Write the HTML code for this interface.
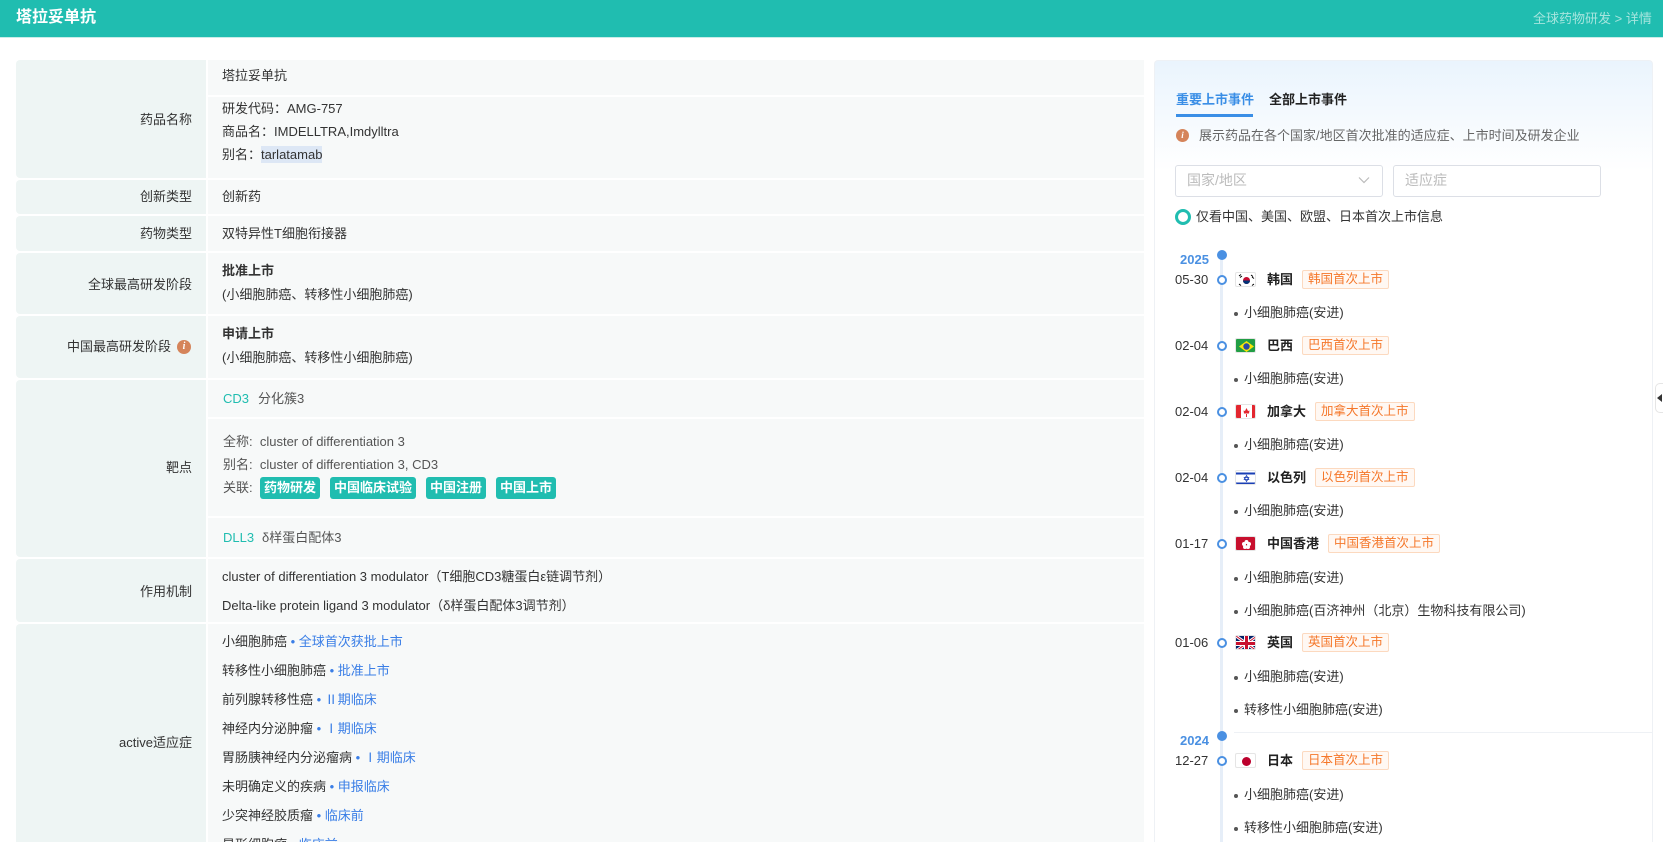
<!DOCTYPE html>
<html style="width:1663px;height:842px;overflow:hidden"><head><meta charset="utf-8"><style>
*{margin:0;padding:0;box-sizing:border-box}
body{width:1663px;height:842px;overflow:hidden;background:#fff;font-family:"Liberation Sans","Noto Sans CJK SC",sans-serif;font-size:13px;line-height:19px;color:#333;position:relative}
.a{position:absolute;white-space:nowrap;line-height:19px}
.hdr{position:absolute;left:0;top:0;width:1663px;height:38px;background:#20bdb0;border-bottom:1px solid #c9ece8}
.lb{position:absolute;left:16px;width:190px;background:#eef5f4;border-radius:4px 0 0 4px}
.vl{position:absolute;left:208px;width:936px;background:#f7f9f9}
.lt{position:absolute;right:1471px;white-space:nowrap;font-size:13px;line-height:19px;color:#333}
.tag{position:absolute;height:22px;line-height:22px;background:#20bdb0;color:#fff;font-weight:bold;border-radius:3px;padding:0 4px;font-size:13px}
.blue{color:#3a7ee6}
.panel{position:absolute;left:1154px;top:60px;width:499px;height:782px;border:1px solid #eef1f5;border-bottom:none;border-radius:4px 4px 0 0;background:linear-gradient(#eaf4fd 0,#fff 110px)}
.date{position:absolute;left:1175px;font-size:13px;line-height:19px;color:#333}
.dot{position:absolute;left:1217px;width:10px;height:10px;border:2.5px solid #4a90e2;border-radius:50%;background:#fff}
.fl{position:absolute;left:1235px;width:21px;height:15px;border:1px solid #e5e5e5;border-radius:2px;overflow:hidden}
.cn{position:absolute;left:1267px;font-weight:bold;color:#222;line-height:19px;white-space:nowrap}
.tg{position:absolute;height:19px;line-height:17px;border:1px solid #fcd9bf;background:#fff8f3;color:#f5772a;padding:0 5px;font-size:12.5px;border-radius:2px;white-space:nowrap}
.bl{position:absolute;left:1234px;color:#333;line-height:19px;white-space:nowrap}
.bl:before{content:"";display:inline-block;width:4px;height:4px;background:#555;border-radius:50%;margin-right:6px;vertical-align:middle}
</style></head><body>
<div class="hdr"></div>
<div class="a" style="left:16px;top:8px;font-size:16px;font-weight:bold;color:#fff;line-height:20px">塔拉妥单抗</div>
<div class="a" style="left:1533px;top:9px;font-size:13px;color:#a6e5de">全球药物研发 &gt; 详情</div>

<div class="lb" style="top:60px;height:118px"></div>
<div class="vl" style="top:60px;height:35px"></div>
<div class="vl" style="top:97px;height:81px"></div>
<div class="lb" style="top:180px;height:34px"></div><div class="vl" style="top:180px;height:34px"></div>
<div class="lb" style="top:216px;height:35px"></div><div class="vl" style="top:216px;height:35px"></div>
<div class="lb" style="top:253px;height:61px"></div><div class="vl" style="top:253px;height:61px"></div>
<div class="lb" style="top:316px;height:62px"></div><div class="vl" style="top:316px;height:62px"></div>
<div class="lb" style="top:380px;height:177px"></div>
<div class="vl" style="top:380px;height:37px"></div>
<div class="vl" style="top:419px;height:97px"></div>
<div class="vl" style="top:518px;height:39px"></div>
<div class="lb" style="top:559px;height:63px"></div><div class="vl" style="top:559px;height:63px"></div>
<div class="lb" style="top:624px;height:218px;border-radius:4px 0 0 0"></div><div class="vl" style="top:624px;height:218px"></div>

<div class="lt" style="top:110px">药品名称</div>
<div class="lt" style="top:187px">创新类型</div>
<div class="lt" style="top:224px">药物类型</div>
<div class="lt" style="top:275px">全球最高研发阶段</div>
<div class="lt" style="top:337px;right:1492px">中国最高研发阶段</div>
<div class="a" style="left:177px;top:340px;width:14px;height:14px;border-radius:50%;background:#d5845a;color:#fff;font-size:10px;font-style:italic;font-weight:bold;text-align:center;line-height:14px;font-family:'Liberation Serif',serif">i</div>
<div class="lt" style="top:458px">靶点</div>
<div class="lt" style="top:582px">作用机制</div>
<div class="lt" style="top:733px">active适应症</div>

<div class="a" style="left:222px;top:66px">塔拉妥单抗</div>
<div class="a" style="left:222px;top:99px">研发代码：AMG-757</div>
<div class="a" style="left:222px;top:122px">商品名：IMDELLTRA,Imdylltra</div>
<div class="a" style="left:222px;top:145px">别名：<span style="background:#dde7f5;padding:1px 0">tarlatamab</span></div>
<div class="a" style="left:222px;top:187px">创新药</div>
<div class="a" style="left:222px;top:224px">双特异性T细胞衔接器</div>
<div class="a" style="left:222px;top:261px;font-weight:bold">批准上市</div>
<div class="a" style="left:222px;top:285px">(小细胞肺癌、转移性小细胞肺癌)</div>
<div class="a" style="left:222px;top:324px;font-weight:bold">申请上市</div>
<div class="a" style="left:222px;top:348px">(小细胞肺癌、转移性小细胞肺癌)</div>
<div class="a" style="left:223px;top:389px;color:#20bdb0">CD3</div>
<div class="a" style="left:258px;top:389px;color:#555">分化簇3</div>
<div class="a" style="left:223px;top:432px;color:#555">全称:&nbsp; cluster of differentiation 3</div>
<div class="a" style="left:223px;top:455px;color:#555">别名:&nbsp; cluster of differentiation 3, CD3</div>
<div class="a" style="left:223px;top:478px;color:#555">关联:</div>
<div class="tag" style="left:260px;top:477px">药物研发</div>
<div class="tag" style="left:330px;top:477px">中国临床试验</div>
<div class="tag" style="left:426px;top:477px">中国注册</div>
<div class="tag" style="left:496px;top:477px">中国上市</div>
<div class="a" style="left:223px;top:528px;color:#20bdb0">DLL3</div>
<div class="a" style="left:262px;top:528px;color:#555">δ样蛋白配体3</div>
<div class="a" style="left:222px;top:567px">cluster of differentiation 3 modulator（T细胞CD3糖蛋白ε链调节剂）</div>
<div class="a" style="left:222px;top:596px">Delta-like protein ligand 3 modulator（δ样蛋白配体3调节剂）</div>
<div class="a" style="left:222px;top:632px">小细胞肺癌<span class="blue"> • 全球首次获批上市</span></div>
<div class="a" style="left:222px;top:661px">转移性小细胞肺癌<span class="blue"> • 批准上市</span></div>
<div class="a" style="left:222px;top:690px">前列腺转移性癌<span class="blue"> • Ⅱ期临床</span></div>
<div class="a" style="left:222px;top:719px">神经内分泌肿瘤<span class="blue"> • Ⅰ期临床</span></div>
<div class="a" style="left:222px;top:748px">胃肠胰神经内分泌瘤病<span class="blue"> • Ⅰ期临床</span></div>
<div class="a" style="left:222px;top:777px">未明确定义的疾病<span class="blue"> • 申报临床</span></div>
<div class="a" style="left:222px;top:806px">少突神经胶质瘤<span class="blue"> • 临床前</span></div>
<div class="a" style="left:222px;top:835px">星形细胞瘤<span class="blue"> • 临床前</span></div>

<div class="panel"></div>
<div class="a" style="left:1176px;top:90px;color:#3a8ee6;font-weight:bold">重要上市事件</div>
<div class="a" style="left:1176px;top:114px;width:77px;height:3px;background:#3a8ee6"></div>
<div class="a" style="left:1269px;top:90px;color:#222;font-weight:bold">全部上市事件</div>
<div class="a" style="left:1176px;top:129px;width:13px;height:13px;border-radius:50%;background:#d5845a;color:#fff;font-size:9px;font-style:italic;font-weight:bold;text-align:center;line-height:13px;font-family:'Liberation Serif',serif">i</div>
<div class="a" style="left:1199px;top:126px;color:#666">展示药品在各个国家/地区首次批准的适应症、上市时间及研发企业</div>
<div class="a" style="left:1175px;top:165px;width:208px;height:32px;border:1px solid #dcdfe6;border-radius:3px;background:#fff"></div>
<div class="a" style="left:1187px;top:171px;color:#bbb;font-size:14px">国家/地区</div>
<svg class="a" style="left:1358px;top:176px" width="12" height="8"><path d="M1 1.5L6 6.5L11 1.5" stroke="#bbb" fill="none" stroke-width="1.2"/></svg>
<div class="a" style="left:1393px;top:165px;width:208px;height:32px;border:1px solid #dcdfe6;border-radius:3px;background:#fff"></div>
<div class="a" style="left:1405px;top:171px;color:#bbb;font-size:14px">适应症</div>
<div class="a" style="left:1175px;top:209px;width:16px;height:16px;border:3px solid #20bdb0;border-radius:50%"></div>
<div class="a" style="left:1196px;top:207px;color:#333">仅看中国、美国、欧盟、日本首次上市信息</div>

<div class="a" style="left:1220px;top:255px;width:3px;height:587px;background:#e6eef8"></div>
<div class="a" style="left:1180px;top:250px;color:#4a90e2;font-weight:bold">2025</div>
<div class="a" style="left:1217px;top:250px;width:10px;height:10px;border-radius:50%;background:#4a90e2"></div>

<div class="date" style="top:270px">05-30</div><div class="dot" style="top:275px"></div>
<div class="fl" style="top:272px;background:#fff"><svg width="21" height="15"><circle cx="10.5" cy="7.5" r="3.5" fill="#c60c30"/><path d="M7 7.5a3.5 3.5 0 0 0 7 0" fill="#003478"/><g stroke="#000" stroke-width="1"><path d="M3 3l2 -1.5M4 4.5l2-1.5M15 2l2 1.5M16 4l2 1.5M3 11l2 1.5M16 12.5l2-1.5"/></g></svg></div>
<div class="cn" style="top:270px">韩国</div><div class="tg" style="left:1302px;top:270px">韩国首次上市</div>
<div class="bl" style="top:303px">小细胞肺癌(安进)</div>

<div class="date" style="top:336px">02-04</div><div class="dot" style="top:341px"></div>
<div class="fl" style="top:338px;background:#229e45"><svg width="21" height="15"><path d="M10.5 2L18 7.5L10.5 13L3 7.5Z" fill="#f8e509"/><circle cx="10.5" cy="7.5" r="3.2" fill="#2b49a3"/></svg></div>
<div class="cn" style="top:336px">巴西</div><div class="tg" style="left:1302px;top:336px">巴西首次上市</div>
<div class="bl" style="top:369px">小细胞肺癌(安进)</div>

<div class="date" style="top:402px">02-04</div><div class="dot" style="top:407px"></div>
<div class="fl" style="top:404px;background:#fff"><svg width="21" height="15"><rect width="5" height="15" fill="#e3262f"/><rect x="16" width="5" height="15" fill="#e3262f"/><path d="M10.5 3l1.5 3 1.5-.5-.5 3h-5l-.5-3 1.5.5z M10 9h1v3h-1z" fill="#e3262f"/></svg></div>
<div class="cn" style="top:402px">加拿大</div><div class="tg" style="left:1315px;top:402px">加拿大首次上市</div>
<div class="bl" style="top:435px">小细胞肺癌(安进)</div>

<div class="date" style="top:468px">02-04</div><div class="dot" style="top:473px"></div>
<div class="fl" style="top:470px;background:#fff"><svg width="21" height="15"><rect y="1.5" width="21" height="2" fill="#1a3fb5"/><rect y="11.5" width="21" height="2" fill="#1a3fb5"/><path d="M10.5 4.5l2.3 4h-4.6zM10.5 10.5l2.3-4h-4.6z" fill="none" stroke="#1a3fb5" stroke-width=".8"/></svg></div>
<div class="cn" style="top:468px">以色列</div><div class="tg" style="left:1315px;top:468px">以色列首次上市</div>
<div class="bl" style="top:501px">小细胞肺癌(安进)</div>

<div class="date" style="top:534px">01-17</div><div class="dot" style="top:539px"></div>
<div class="fl" style="top:536px;background:#c8102e"><svg width="21" height="15"><g fill="#fff"><circle cx="10.5" cy="5" r="2"/><circle cx="13" cy="7" r="2"/><circle cx="12" cy="10" r="2"/><circle cx="9" cy="10" r="2"/><circle cx="8" cy="7" r="2"/></g></svg></div>
<div class="cn" style="top:534px">中国香港</div><div class="tg" style="left:1328px;top:534px">中国香港首次上市</div>
<div class="bl" style="top:568px">小细胞肺癌(安进)</div>
<div class="bl" style="top:601px">小细胞肺癌(百济神州（北京）生物科技有限公司)</div>

<div class="date" style="top:633px">01-06</div><div class="dot" style="top:638px"></div>
<div class="fl" style="top:635px;background:#012169"><svg width="21" height="15"><path d="M0 0L21 15M21 0L0 15" stroke="#fff" stroke-width="3"/><path d="M0 0L21 15M21 0L0 15" stroke="#c8102e" stroke-width="1"/><path d="M10.5 0v15M0 7.5h21" stroke="#fff" stroke-width="5"/><path d="M10.5 0v15M0 7.5h21" stroke="#c8102e" stroke-width="3"/></svg></div>
<div class="cn" style="top:633px">英国</div><div class="tg" style="left:1302px;top:633px">英国首次上市</div>
<div class="bl" style="top:667px">小细胞肺癌(安进)</div>
<div class="bl" style="top:700px">转移性小细胞肺癌(安进)</div>

<div class="a" style="left:1234px;top:732px;width:419px;height:1px;background:#eef1f5"></div>
<div class="a" style="left:1180px;top:731px;color:#4a90e2;font-weight:bold">2024</div>
<div class="a" style="left:1217px;top:731px;width:10px;height:10px;border-radius:50%;background:#4a90e2"></div>
<div class="date" style="top:751px">12-27</div><div class="dot" style="top:756px"></div>
<div class="fl" style="top:753px;background:#fff"><svg width="21" height="15"><circle cx="10.5" cy="7.5" r="4.5" fill="#bc002d"/></svg></div>
<div class="cn" style="top:751px">日本</div><div class="tg" style="left:1302px;top:751px">日本首次上市</div>
<div class="bl" style="top:785px">小细胞肺癌(安进)</div>
<div class="bl" style="top:818px">转移性小细胞肺癌(安进)</div>

<div class="a" style="left:1655px;top:383px;width:8px;height:30px;background:#fff;border:1px solid #e5e5e5;border-right:none;border-radius:5px 0 0 5px"></div>
<div class="a" style="left:1657px;top:394px;width:0;height:0;border-top:4px solid transparent;border-bottom:4px solid transparent;border-right:5px solid #333"></div>
</body></html>
